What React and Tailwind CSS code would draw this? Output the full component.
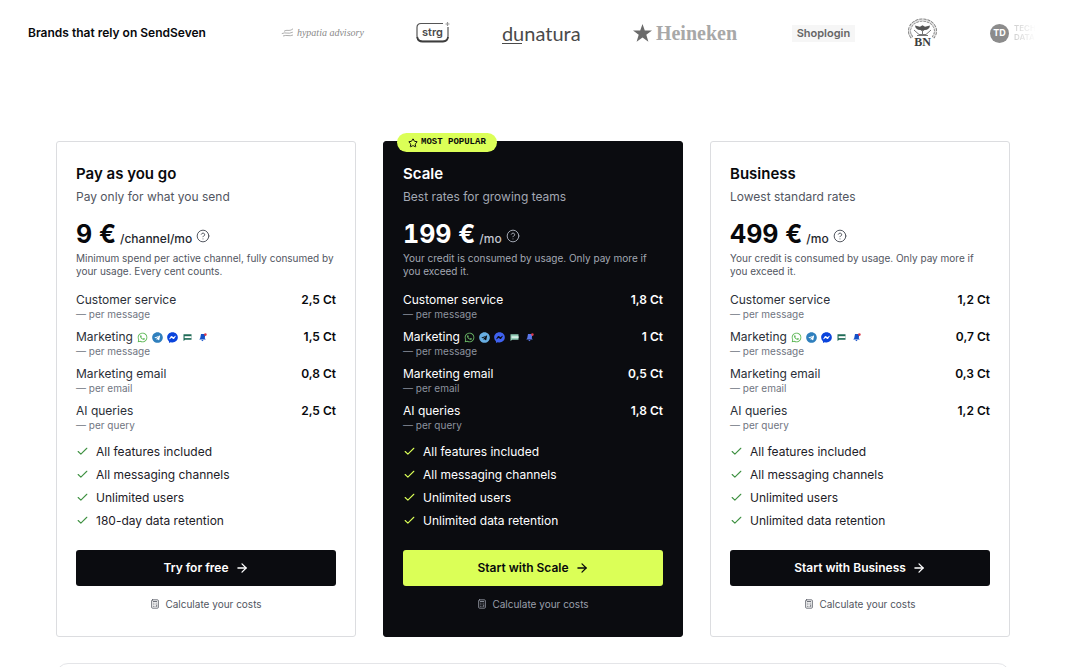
import React from 'react';
import { ArrowRight, Calculator, Check, CircleQuestionMark, Star } from 'lucide-react';
import { FaFacebookMessenger, FaTelegram, FaWhatsapp } from 'react-icons/fa';
import clsx from 'clsx';

const defaultNote = 'Your credit is consumed by usage. Only pay more if you exceed it.';

const plans = [
  {
    name: 'Pay as you go',
    tagline: 'Pay only for what you send',
    price: '9 €',
    unit: '/channel/mo',
    note: 'Minimum spend per active channel, fully consumed by your usage. Every cent counts.',
    rates: ['2,5 Ct', '1,5 Ct', '0,8 Ct', '2,5 Ct'],
    retention: '180-day data retention',
    cta: 'Try for free',
  },
  {
    name: 'Scale',
    tagline: 'Best rates for growing teams',
    price: '199 €',
    unit: '/mo',
    note: defaultNote,
    rates: ['1,8 Ct', '1 Ct', '0,5 Ct', '1,8 Ct'],
    retention: 'Unlimited data retention',
    cta: 'Start with Scale',
    popular: true,
  },
  {
    name: 'Business',
    tagline: 'Lowest standard rates',
    price: '499 €',
    unit: '/mo',
    note: defaultNote,
    rates: ['1,2 Ct', '0,7 Ct', '0,3 Ct', '1,2 Ct'],
    retention: 'Unlimited data retention',
    cta: 'Start with Business',
  },
];

const rateLabels = [
  { label: 'Customer service', per: 'per message' },
  { label: 'Marketing', per: 'per message', channels: true },
  { label: 'Marketing email', per: 'per email' },
  { label: 'AI queries', per: 'per query' },
];

const ChannelIcons = ({ dark }) => (
  <span className="flex items-center gap-1">
    <FaWhatsapp size={11} className={dark ? 'text-[#6fbf6a]' : 'text-[#55b44e]'} />
    <FaTelegram size={11} className={dark ? 'text-[#68aee2]' : 'text-[#2f7fbd]'} />
    <FaFacebookMessenger size={11} className={dark ? 'text-[#3f62f0]' : 'text-[#0a44dc]'} />
    {/* SMS */}
    <svg width="11" height="11" viewBox="0 0 11 11" className={dark ? 'text-[#8fc9b4]' : 'text-[#1f6b57]'}>
      <path d="M1.500 2.200h8v5.600H3.200L1.500 9z" fill="currentColor" />
      <path d="M2.600 4.200h6.900v1.900H2.600z" fill={dark ? '#d5eee5' : '#ffffff'} />
    </svg>
    {/* Push notification */}
    <svg width="11" height="11" viewBox="0 0 11 11">
      <path d="M4 2h4.400l-.6 4.200 1 1.200H2.200l1-1.200z" fill={dark ? '#5b78ea' : '#1450c8'} />
      <path d="M4.400 8h2.200L5.200 9.200z" fill={dark ? '#5b78ea' : '#1450c8'} />
      <circle cx="8.400" cy="2.600" r="1.300" fill="#dc3a4b" />
    </svg>
  </span>
);

const PlanCard = ({ plan }) => {
  const dark = plan.popular;
  const features = ['All features included', 'All messaging channels', 'Unlimited users', plan.retention];

  return (
    <article
      className={clsx(
        'relative rounded-[3px] border px-[19px] pt-5 pb-6',
        dark ? 'border-[#0b0c10] bg-[#0b0c10] text-white' : 'border-[#dcdde0] bg-white text-[#08090c]'
      )}
    >
      {dark && (
        <div className="absolute -top-[9px] left-[13px] flex h-[19px] items-center gap-[3px] rounded-full bg-[#dbff57] px-[11px] font-['Liberation_Mono',monospace] text-[9px] font-bold text-[#08090c]">
          <Star size={10} strokeWidth={2.4} />
          MOST POPULAR
        </div>
      )}

      <h2 className="text-[15px] leading-6 font-semibold">{plan.name}</h2>
      <p className={clsx('mt-px text-xs leading-5', dark ? 'text-[#a3a8b3]' : 'text-[#52565f]')}>{plan.tagline}</p>

      <div className="mt-[11px] flex h-8 items-baseline gap-1">
        <span className="text-[25px] leading-8 font-bold tabular-nums">{plan.price}</span>
        <span className={clsx('text-xs font-medium', dark ? 'text-[#c3c7cf]' : 'text-[#23262d]')}>{plan.unit}</span>
        <button
          type="button"
          aria-label="How billing works"
          className={clsx('self-center pt-1', dark ? 'text-[#a3a8b3]' : 'text-[#52565f]')}
        >
          <CircleQuestionMark size={14} strokeWidth={1.7} />
        </button>
      </div>
      <p className={clsx('mt-0.5 text-[10px] leading-[13px]', dark ? 'text-[#a3a8b3]' : 'text-[#52565f]')}>{plan.note}</p>

      <dl className="mt-[14px] flex flex-col gap-2">
        {rateLabels.map((rate, i) => (
          <div key={rate.label} className="flex justify-between">
            <dt>
              <span className={clsx('flex items-center gap-1 text-xs leading-4', dark ? 'text-white' : 'text-[#2b2f38]')}>
                {rate.label}
                {rate.channels && <ChannelIcons dark={dark} />}
              </span>
              <span className={clsx('block text-[10px] leading-[13px]', dark ? 'text-[#8d939f]' : 'text-[#70757f]')}>
                — {rate.per}
              </span>
            </dt>
            <dd className="text-xs leading-4 font-semibold">{plan.rates[i]}</dd>
          </div>
        ))}
      </dl>

      <ul className="mt-[11px] flex flex-col gap-1.5">
        {features.map((feature) => (
          <li key={feature} className={clsx('flex items-center gap-[7px] text-xs leading-[17px]', dark ? 'text-white' : 'text-[#1d2027]')}>
            <Check size={13} strokeWidth={2} className={dark ? 'text-[#dbff57]' : 'text-[#3f9142]'} />
            {feature}
          </li>
        ))}
      </ul>

      <button
        type="button"
        className={clsx(
          'mt-[21px] flex h-9 w-full items-center justify-center gap-1.5 rounded-[3px] text-xs font-semibold',
          dark ? 'bg-[#dbff57] text-[#08090c]' : 'bg-[#0b0c10] text-white'
        )}
      >
        {plan.cta}
        <ArrowRight size={14} strokeWidth={2.2} />
      </button>
      <a
        href="#calculator"
        className={clsx(
          'mt-[10px] flex items-center justify-center gap-[5px] text-[10px] leading-4',
          dark ? 'text-[#9a9fab]' : 'text-[#52565f]'
        )}
      >
        <Calculator size={10} strokeWidth={2} />
        Calculate your costs
      </a>
    </article>
  );
};

const BrandLogos = () => (
  <div className="flex min-w-0 flex-1 items-center gap-[52px] font-['Inter',sans-serif] text-[#4a4a4a] *:shrink-0">
    <div className="flex w-[83px] items-center gap-[3px] text-[#8a8a8a]">
      <svg width="13" height="10" viewBox="0 0 13 10" fill="none" stroke="currentColor" strokeWidth="0.7" className="shrink-0">
        <path d="M3 3.400C6 1 8 4 12 .8M.8 5.600c4-2 6 1 11-1.400M2 8c4-1.600 6 .8 10-1" />
      </svg>
      <span className="font-['Liberation_Serif',serif] text-[10px] leading-4 whitespace-nowrap italic">hypatia advisory</span>
    </div>

    <svg width="34" height="24" viewBox="0 0 34 24">
      <path d="M27 2.500H5Q1 2.500 1 6.500V15Q1 20 6 20H27Q32 20 32 15V6" fill="none" stroke="#555" strokeWidth="1.200" />
      <path d="M1.200 16Q2 20.600 6.500 20.600H27Q31.500 20.600 32 16" fill="none" stroke="#3d3d3d" strokeWidth="1.800" />
      <path d="M31.500 1v4M29.500 3h4" stroke="#999" strokeWidth="1.200" />
      <text x="16.500" y="15" textAnchor="middle" fontFamily="Inter, sans-serif" fontSize="11" fontWeight="600" fill="#4a4a4a">strg</text>
    </svg>

    <div className="w-[79px] font-['Lato',sans-serif] text-xl leading-5">
      dunatura
      <div className="h-px w-5 bg-[#4a4a4a]" />
    </div>

    <div className="flex w-[107px] items-center gap-1">
      <svg width="19" height="18" viewBox="0 0 19 18" fill="#6b6b6b">
        <path d="M9.500 0l2.300 6.600H19l-5.700 4.200 2.100 7-5.900-4.200-5.900 4.200 2.100-7L0 6.600h7.200z" />
      </svg>
      <span className="font-['Liberation_Serif',serif] text-xl leading-6 font-bold text-[#a8a8a8]">Heineken</span>
    </div>

    <div className="flex h-[17px] w-[63px] items-center justify-center bg-[#f6f6f6] text-[11px] font-semibold text-[#666]">
      Shoplogin
    </div>

    <svg width="31" height="32" viewBox="0 0 31 32" fill="none" stroke="#777">
      <path d="M5 20.500A13 11 0 1 1 26 20.500" strokeWidth="3" strokeDasharray="3 .8" />
      <path d="M5 20.500A13 11 0 1 1 26 20.500" strokeWidth="1.400" stroke="#e2e2e2" />
      <path d="M8 8.500l5 1.200 2.500-1.500 2.500 1.500 5-1.200c-.3 3-2.500 4.800-5.500 4.600l-2 1.500-2-1.500C10.500 13.300 8.300 11.500 8 8.500z" fill="#555" stroke="none" />
      <path d="M15.500 13v5M7 13l5 4.500h7l5-4.500M10 18.500h11" strokeWidth="1" />
      <text x="15.500" y="29" textAnchor="middle" fontFamily="Liberation Serif, serif" fontSize="12" fontWeight="700" fill="#3d3d3d" stroke="none">BN</text>
    </svg>

    <div className="flex items-center gap-[5px]">
      <span className="flex size-[19px] items-center justify-center rounded-full bg-[#8c8c8c] text-[9px] font-bold text-white">TD</span>
      <span className="bg-linear-to-r from-[#cfcfcf] to-white to-[22px] bg-clip-text text-[8px] leading-[9px] font-semibold text-transparent">
        TECH
        <br />
        DATA
      </span>
    </div>
  </div>
);

const App = () => {
  return (
    <div className="bg-white font-['Inter',sans-serif]">
      <header className="flex items-center gap-[75px] pt-[17px] pr-6 pl-7">
        <p className="text-xs font-semibold whitespace-nowrap text-[#08090c]">Brands that rely on SendSeven</p>
        <BrandLogos />
      </header>

      <main className="pt-[92px] pr-[60px] pl-14">
        <section className="grid grid-cols-3 gap-[27px]">
          {plans.map((plan) => (
            <PlanCard key={plan.name} plan={plan} />
          ))}
        </section>
        <section className="mt-[26px] h-24 rounded-xl border border-[#e4e5e8]" />
      </main>
    </div>
  );
};

export default App;
